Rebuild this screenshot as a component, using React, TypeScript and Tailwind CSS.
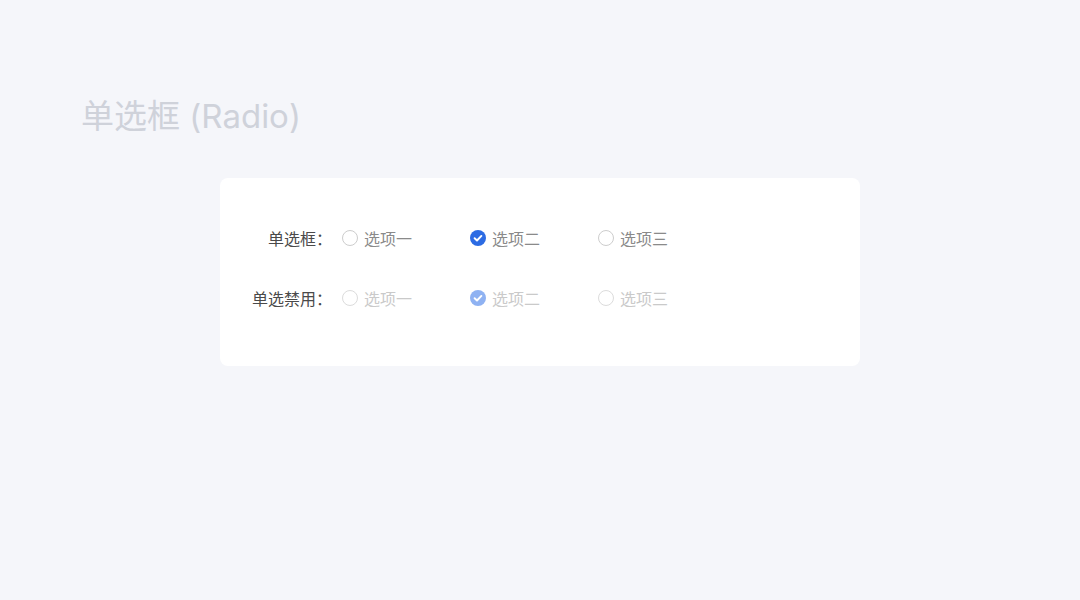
const options = ['选项一', '选项二', '选项三']

function Radio({ checked, disabled }: { checked: boolean; disabled: boolean }) {
  if (checked) {
    return (
      <svg width="16" height="16" viewBox="0 0 16 16" className="shrink-0">
        <circle cx="8" cy="8" r="8" fill={disabled ? '#8fb2f2' : '#2c6be3'} />
        <path d="M4.6 8.2 L7 10.5 L11.4 5.9" fill="none" stroke="#fff" strokeWidth="1.9" strokeLinecap="round" strokeLinejoin="round" />
      </svg>
    )
  }
  return (
    <span
      className={`w-4 h-4 shrink-0 rounded-full border bg-white ${disabled ? 'border-[#dcdcdc]' : 'border-[#cdcdcd]'}`}
    />
  )
}

function Row({ label, disabled }: { label: string; disabled: boolean }) {
  return (
    <div className="flex items-center h-5">
      <div className="w-[112px] text-right text-base leading-5 text-[#4a4a4a]">{label}</div>
      <div className="flex ml-[10px]">
        {options.map((o, i) => (
          <label key={o} className="w-32 flex items-center gap-[6px]">
            <Radio checked={i === 1} disabled={disabled} />
            <span className={`text-base leading-5 ${disabled ? 'text-[#cacaca]' : 'text-[#8a8a8a]'}`}>{o}</span>
          </label>
        ))}
      </div>
    </div>
  )
}

export default function App() {
  return (
    <div
      className="min-h-screen bg-[#f5f6fa] pt-[96px]"
      style={{ fontFamily: '"Noto Sans CJK SC", "Noto Sans", sans-serif' }}
    >
      <h1
        className="pl-[81px] text-[33px] leading-[40px] text-[#cfd2da] font-normal"
        style={{ fontFamily: 'Inter, "Noto Sans CJK SC", sans-serif' }}
      >
        单选框 (Radio)
      </h1>
      <div className="ml-[220px] mt-[42px] w-[640px] h-[188px] bg-white rounded-lg pt-[50px] flex flex-col gap-10">
        <Row label="单选框：" disabled={false} />
        <Row label="单选禁用：" disabled={true} />
      </div>
    </div>
  )
}
